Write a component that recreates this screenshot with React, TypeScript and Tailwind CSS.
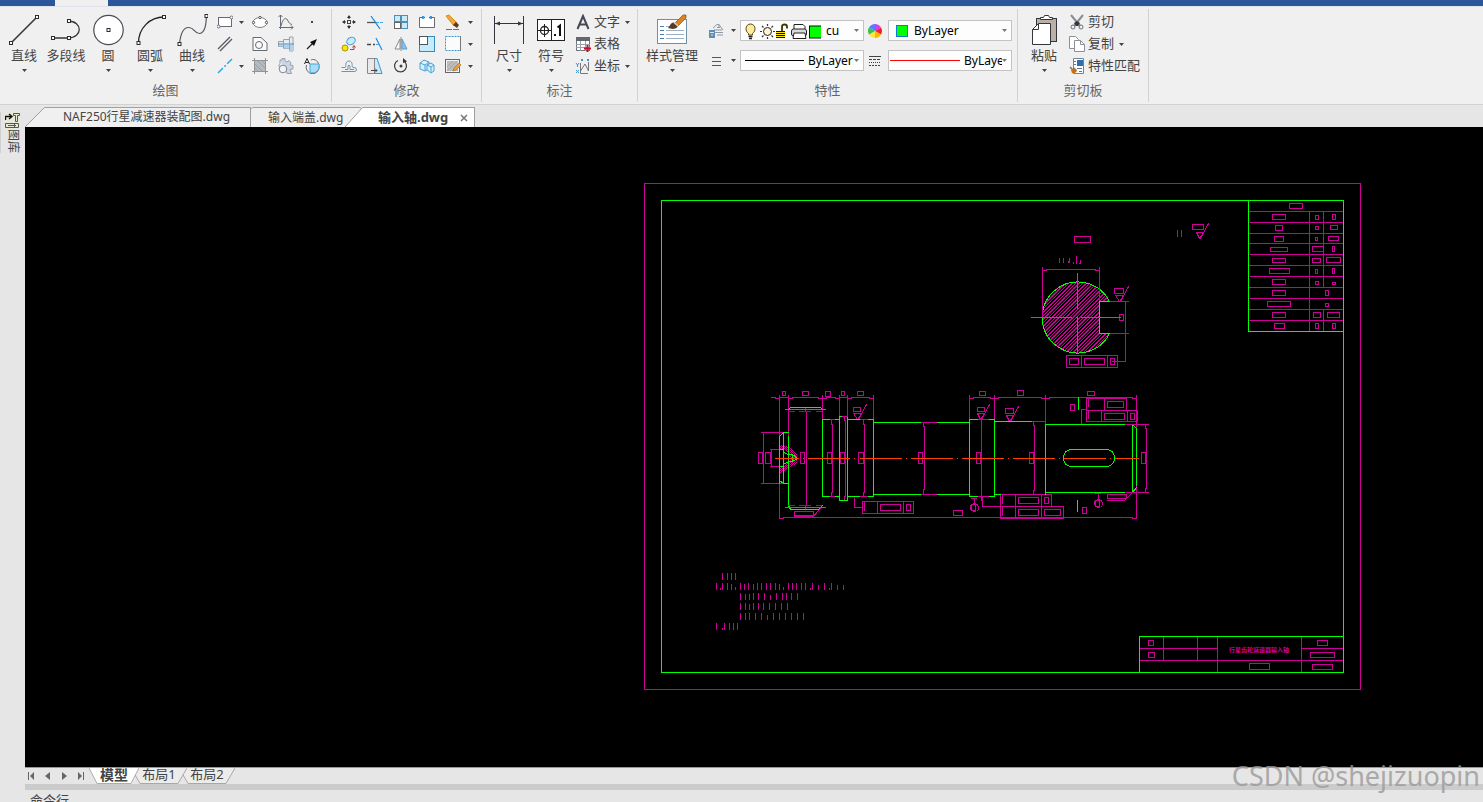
import type { ReactNode } from "react";

const MAGENTA = "#cc0099";
const GREEN = "#00ff00";
const ORANGE = "#ff3f00";
const BLUE = "#003fff";

/* ---------- small shared pieces ---------- */

function Caret({ className = "text-[#444]" }: { className?: string }) {
  return (
    <svg width="5" height="3" viewBox="0 0 5 3" className={className} aria-hidden="true">
      <path d="M0 0H5L2.5 3Z" fill="currentColor" />
    </svg>
  );
}

function Icon({ children, size = 16 }: { children: ReactNode; size?: number }) {
  const box = "0 0 " + size + " " + size;
  return (
    <svg width={size} height={size} viewBox={box} fill="none" stroke="#666b73" strokeWidth="1" className="shrink-0" aria-hidden="true">
      {children}
    </svg>
  );
}

function BigTool({ label, children, caret = true, width = "w-[42px]" }: { label: string; children: ReactNode; caret?: boolean; width?: string }) {
  return (
    <button type="button" className={"flex flex-col items-center pt-[3px] " + width}>
      <Icon size={32}>{children}</Icon>
      <span className="h-5 whitespace-nowrap text-[13px] leading-[18px]">{label}</span>
      {caret && (
        <span className="flex h-2 items-center">
          <Caret />
        </span>
      )}
    </button>
  );
}

function SmallTool({ label, children, width = "w-[26px]" }: { label: string; children: ReactNode; width?: string }) {
  return (
    <button type="button" aria-label={label} className={"flex h-[22px] items-center justify-center " + width}>
      <Icon>{children}</Icon>
    </button>
  );
}

function MoreButton({ label, width = "w-[11px]" }: { label: string; width?: string }) {
  return (
    <button type="button" aria-label={label} className={"flex h-[22px] items-center justify-center " + width}>
      <Caret />
    </button>
  );
}

function RowTool({ label, children, caret = false }: { label: string; children: ReactNode; caret?: boolean }) {
  return (
    <button type="button" className="flex h-[22px] items-center gap-[3px] text-[13px] leading-5">
      <Icon>{children}</Icon>
      <span className="whitespace-nowrap pb-[2px]">{label}</span>
      {caret && (
        <span className="ml-[2px]">
          <Caret />
        </span>
      )}
    </button>
  );
}

function Group({ label, children, className }: { label: string; children: ReactNode; className: string }) {
  return (
    <section aria-label={label} className="flex shrink-0 flex-col border-r border-[#d2d2d2] pt-[2px]">
      <div className={"flex h-[66px] items-start " + className}>{children}</div>
      <div className="mt-1 h-5 text-center text-[13px] leading-[19px] text-[#666]">{label}</div>
    </section>
  );
}

function Combo({ label, value, lead, gap = "gap-1" }: { label: string; value: string; lead: ReactNode; gap?: string }) {
  return (
    <label className="flex h-[21px] w-[124px] items-center border border-[#c3c3c3] bg-[#fdfdfd] pr-1 text-black">
      <span className={"flex min-w-0 flex-1 items-center " + gap}>
        {lead}
        <select aria-label={label} className="min-w-0 flex-1 appearance-none bg-transparent text-[12px] leading-4 outline-none">
          <option>{value}</option>
        </select>
      </span>
      <Caret className="shrink-0 text-[#777]" />
    </label>
  );
}

function Node({ x, y }: { x: number; y: number }) {
  return <rect x={x - 1.5} y={y - 1.5} width="3" height="3" fill="#fff" stroke="#2b2d33" />;
}

/* ---------- ribbon ---------- */

function DrawGroup() {
  return (
    <Group label="绘图" className="pl-[3px] pr-[6px]">
      <BigTool label="直线">
        <path d="M3 29L29 3" stroke="#33363d" strokeWidth="1.6" />
        <Node x={3} y={29} />
        <Node x={29} y={3} />
      </BigTool>
      <BigTool label="多段线" caret={false}>
        <path d="M3 24H18C33 24 33 7 18 7" stroke="#33363d" strokeWidth="1.3" />
        <Node x={3} y={24} />
        <Node x={19} y={24} />
        <Node x={19} y={7} />
      </BigTool>
      <BigTool label="圆">
        <circle cx="16.5" cy="16" r="14.7" fill="#fff" stroke="#4a4d55" strokeWidth="1.2" />
        <Node x={16.5} y={16} />
      </BigTool>
      <BigTool label="圆弧">
        <path d="M4.5 29C4.5 14 16 3 30 3" stroke="#222" strokeWidth="1.3" />
        <Node x={4.5} y={29} />
        <Node x={30} y={3} />
      </BigTool>
      <BigTool label="曲线">
        <path d="M3.500 30C4.500 20 7 13 13 13.500C19 14 18 20 24 19.500C29.500 18 30 10 30.500 2" stroke="#555860" strokeWidth="1.2" />
        <Node x={3.5} y={30} />
        <Node x={30.5} y={2} />
      </BigTool>
      <div className="ml-px grid grid-cols-[22px_11px_26px_26px_26px]">
        <SmallTool label="矩形" width="w-full">
          <rect x="1.500" y="3.500" width="13" height="9" fill="#fff" />
          <circle cx="1.500" cy="12.500" r="1.500" fill="#fff" />
          <circle cx="14.500" cy="3.500" r="1.500" fill="#fff" />
        </SmallTool>
        <MoreButton label="更多矩形" />
        <SmallTool label="椭圆">
          <ellipse cx="8" cy="8.500" rx="7" ry="5" fill="#fff" stroke="#7c8087" />
          <circle cx="1.500" cy="8.500" r="1.200" fill="#fff" stroke="#555" />
          <circle cx="14.500" cy="8.500" r="1.200" fill="#fff" stroke="#555" />
          <circle cx="8" cy="3.500" r="1.200" fill="#fff" stroke="#555" />
        </SmallTool>
        <SmallTool label="公式曲线">
          <path d="M2.500 1V15M0.500 3L2.500 1L4.500 3M1 13.500H15M13 11.500L15 13.500L13 15.500M3 12C5 4 8 3 9.500 6C11 9 12 10 14 10.500" />
        </SmallTool>
        <SmallTool label="点">
          <rect x="7" y="7" width="2" height="2" fill="#444" stroke="none" />
        </SmallTool>

        <SmallTool label="平行线" width="w-full">
          <path d="M1 13L13 1M3 15L15 3" stroke="#55585e" strokeWidth="1.300" />
        </SmallTool>
        <span />
        <SmallTool label="轮廓">
          <path d="M1 1.500H9L15 7V14.500H1Z" fill="#fafafa" />
          <circle cx="7" cy="9" r="3.500" />
        </SmallTool>
        <SmallTool label="孔轴">
          <path d="M0.500 5.500H5.500V3.500H11.500V1H15V15H11.500V12.500H5.500V10.500H0.500Z" fill="#e7edf2" stroke="#9aa1a8" />
          <path d="M1 9H15V15H11.500V12.500H5.500V10.500H1Z" fill="#b4cfe6" stroke="none" />
          <path d="M0 8H16" stroke="#3b8bcf" />
          <path d="M5.500 4V12M11.500 2V14" stroke="#9aa1a8" />
        </SmallTool>
        <SmallTool label="箭头">
          <path d="M3 13L9 7" stroke="#222" strokeWidth="1.300" />
          <path d="M13 3L6 6L10 10Z" fill="#111" stroke="none" />
        </SmallTool>

        <SmallTool label="中心线" width="w-full">
          <path d="M1 15L15 1" stroke="#2fa8df" strokeWidth="1.500" strokeDasharray="7 2 2 2" />
        </SmallTool>
        <MoreButton label="更多中心线" />
        <SmallTool label="剖面线">
          <rect x="2.500" y="2.500" width="11" height="11" fill="#b4bbbf" stroke="#777" />
          <path d="M2.500 0V16M13.500 0V16M0 2.500H16M0 13.500H16" stroke="#909599" />
          <path d="M3 6L10 13M3 10L6 13M6 3L13 10M10 3L13 6" stroke="#9ba1a5" />
        </SmallTool>
        <SmallTool label="齿轮">
          <path d="M2 2H4V0.500H7V3L9 4L11 2.500L13 5L12 7L15 7.500V11L12 11.500L13.500 15.500H9L8 13" fill="#ccd5e2" stroke="#99a2b1" />
          <path d="M2 2V6L0.500 8L3 9" stroke="#99a2b1" />
          <circle cx="5" cy="11" r="3.800" fill="#f2f2f2" stroke="#7d8694" />
        </SmallTool>
        <SmallTool label="局部放大">
          <path d="M7 2C11 0 15 4 15 8A6.500 6.500 0 1 1 2.500 7" />
          <path d="M6 6H15V9A6 6 0 0 1 6 14Z" fill="#a9dcf5" stroke="#4aa7d9" />
          <path d="M0.500 6L3 0.500L5.500 6M1.500 4.500H4.500" stroke="#222" />
        </SmallTool>
      </div>
    </Group>
  );
}

function ModifyGroup() {
  return (
    <Group label="修改" className="pl-1 pr-[7px]">
      <div className="grid grid-cols-[26px_26px_26px_26px_26px_8px]">
        <SmallTool label="平移">
          <path d="M8 2V5M8 11V14M2 8H5M11 8H14" stroke="#333" />
          <path d="M8 1L10 4H6ZM8 15L10 12H6ZM1 8L4 6V10ZM15 8L12 6V10Z" fill="#333" stroke="none" />
          <rect x="6.500" y="6.500" width="3" height="3" stroke="#444" />
        </SmallTool>
        <SmallTool label="裁剪">
          <path d="M0 8.500H9" stroke="#555" strokeWidth="1.300" />
          <path d="M9 8.500H16" stroke="#45a5e0" strokeDasharray="3 1" />
          <path d="M4 2L13 15" stroke="#1a86d8" strokeWidth="1.300" />
        </SmallTool>
        <SmallTool label="阵列">
          <rect x="1.500" y="1.500" width="6" height="6" fill="#c6ecfb" stroke="#4a90bb" />
          <rect x="8.500" y="1.500" width="6" height="6" fill="#c6ecfb" stroke="#4a90bb" />
          <rect x="8.500" y="8.500" width="6" height="6" fill="#c6ecfb" stroke="#4a90bb" />
          <rect x="1.500" y="8.500" width="6" height="6" fill="#fff" stroke="#666" />
        </SmallTool>
        <SmallTool label="打断">
          <path d="M4 3.500H0.500V13.500H15.500V3.500H12" fill="#fff" />
          <path d="M4 2V5M12 2V5M5 3.500H6M10 3.500H11" stroke="#1a86d8" strokeWidth="1.600" />
        </SmallTool>
        <SmallTool label="删除">
          <path d="M1 2L4 1L12 9L9 12Z" fill="#f3a63a" stroke="#d98b1e" />
          <path d="M8 11L11 8L14 11L12 14Z" fill="#5e3a22" stroke="none" />
          <path d="M1 15.500H15" stroke="#9c5a50" strokeDasharray="6 1" />
        </SmallTool>
        <MoreButton label="更多删除" width="w-2" />

        <SmallTool label="平移复制">
          <circle cx="4" cy="12" r="3" fill="#ffe600" stroke="#a59200" />
          <ellipse cx="10" cy="5" rx="4.500" ry="3.500" fill="#c6ecfb" stroke="#3c96cc" transform="rotate(-35 10 5)" />
          <path d="M9 13.500H13V10M11.500 11.500L13 9.500L14.500 11.500" stroke="#c8362e" />
        </SmallTool>
        <SmallTool label="延伸">
          <path d="M0 8.500H4M6 8.500H8" stroke="#444" strokeWidth="1.300" />
          <path d="M9 2L15 14" stroke="#2a8fd4" strokeWidth="1.300" />
          <path d="M9 8.500H12" stroke="#45a5e0" />
        </SmallTool>
        <SmallTool label="镜像">
          <path d="M7 3V13H2Z" fill="#fff" stroke="#888" />
          <path d="M9 3V13H14Z" fill="#8fc1e8" stroke="#5d9dcc" />
          <path d="M8 1V15" stroke="#888" />
        </SmallTool>
        <SmallTool label="缩放">
          <rect x="0.500" y="0.500" width="15" height="15" fill="#c6ecfb" stroke="#3c88ba" />
          <rect x="0.500" y="0.500" width="8" height="8" fill="#fff" stroke="#555" />
        </SmallTool>
        <SmallTool label="拉伸">
          <rect x="0.500" y="0.500" width="15" height="14" fill="#fbfbfb" stroke="#3c96cc" strokeDasharray="2 1" />
          <path d="M15.500 0V15" stroke="#777" />
        </SmallTool>
        <MoreButton label="更多拉伸" width="w-2" />

        <SmallTool label="等距线">
          <path d="M0.500 9.500H4C6 9 3 3.500 8 3C13 3.500 10 9 12 9.500H13Q15.500 9.500 15.500 12Q15.500 13.500 13 13.500H0.500" stroke="#7591a6" />
          <path d="M4 11.500H7V8Q8 6 9 8V11.500H13" stroke="#7591a6" />
        </SmallTool>
        <SmallTool label="倾斜">
          <path d="M7 0.500H10L15 15.500H7Z" fill="#c6ecfb" stroke="#3c96cc" />
          <path d="M0.500 0.500H7.500V15.500H0.500Z" fill="#e9e9e9" stroke="#888" />
          <path d="M4 12.500H10M8 10.500L10 12.500L8 14.500" stroke="#444" />
        </SmallTool>
        <SmallTool label="旋转">
          <path d="M10 2.500A6 6 0 1 1 5 2.500" stroke="#444" strokeWidth="1.300" />
          <path d="M10 0L14 3.500L10 5Z" fill="#333" stroke="none" />
          <circle cx="8" cy="8" r="1.500" fill="#444" stroke="none" />
        </SmallTool>
        <SmallTool label="三维">
          <path d="M1 5L5 2L10 4V11L6 13L1 11Z M1 5L6 7L10 4M6 7V13" fill="#d4effc" stroke="#4aa3d6" />
          <path d="M8 7L12 5L15 7V13L12 15L8 12Z M8 7L12 9V15M12 9L15 7" fill="#d4effc" stroke="#4aa3d6" />
        </SmallTool>
        <SmallTool label="填充编辑">
          <rect x="0.500" y="1.500" width="14" height="13" fill="#f2f2f2" stroke="#666" />
          <rect x="2" y="3" width="11" height="10" fill="#bdbdbd" stroke="none" />
          <path d="M2 9L8 3M2 13L12 3M7 13L13 7" stroke="#a5a5a5" />
          <path d="M8 13L9 10L14 5L16 7L11 12Z" fill="#e9a13a" stroke="#a36b1b" strokeWidth="0.600" />
        </SmallTool>
        <MoreButton label="更多填充" width="w-2" />
      </div>
    </Group>
  );
}

function AnnotateGroup() {
  return (
    <Group label="标注" className="pl-[6px] pr-[7px]">
      <BigTool label="尺寸">
        <path d="M1.500 2V30M30.500 2V30M2 9.500H30" stroke="#33363d" />
        <path d="M2 9.500L7 7.500V11.500ZM30 9.500L25 7.500V11.500Z" fill="#33363d" stroke="none" />
      </BigTool>
      <BigTool label="符号">
        <rect x="2.500" y="5.500" width="27" height="21" fill="#fff" stroke="#222" />
        <path d="M16.500 5.500V26.500M3 16.500H16M9.500 10V23" stroke="#222" />
        <circle cx="9.500" cy="16.500" r="4" stroke="#222" strokeWidth="1.300" />
        <rect x="19" y="20" width="2" height="2" fill="#111" stroke="none" />
        <path d="M22.500 13.500L25 11.500V22" stroke="#111" strokeWidth="2" />
      </BigTool>
      <div className="ml-[3px] flex flex-col items-start">
        <RowTool label="文字" caret>
          <path d="M2.500 15L8 2L13.500 15M4.500 10.500H11.500" stroke="#444851" strokeWidth="2" />
        </RowTool>
        <RowTool label="表格">
          <rect x="1.500" y="1.500" width="13" height="13" fill="#fff" stroke="#70757c" />
          <rect x="1" y="1" width="14" height="4" fill="#63686f" stroke="none" />
          <path d="M1 8.500H15M1 11.500H15M5.500 5V15M10.500 5V15" stroke="#9aa0a7" />
          <path d="M12.500 9V16M9 12.500H16" stroke="#c8102e" strokeWidth="2" />
        </RowTool>
        <RowTool label="坐标" caret>
          <path d="M5.500 5V15.500H13M5.500 13L10 6L13.500 13V4" stroke="#777" />
          <path d="M1 5L2.500 7L4 5M2.500 7V9M1 12L4 15M4 12L1 15M6 1L8 3M8 1L6 3M12 1L14 3M14 1L12 3" stroke="#3c96cc" />
        </RowTool>
      </div>
    </Group>
  );
}

function LayerIcons() {
  return (
    <svg width="80" height="18" viewBox="0 0 80 18" fill="none" stroke="#222" className="shrink-0" aria-hidden="true">
      <path d="M7.500 13V11.500C5.500 10 5 8.500 5 6.500A4.500 4.500 0 0 1 14 6.500C14 8.500 13.500 10 11.500 11.500V13Z" fill="#ffeb9c" stroke="#4f4520" />
      <path d="M7.500 14.500H11.500M8 16.500H11" stroke="#222" strokeWidth="1.400" />
      <circle cx="26.500" cy="9.500" r="4" fill="#fff3d2" stroke="#222" />
      <path d="M26.500 2V4M26.500 15V17M19 9.500H21M32 9.500H34M21 4L22.500 5.500M32 4L30.500 5.500M21 15L22.500 13.500M32 15L30.500 13.500" stroke="#333" strokeWidth="1.200" />
      <rect x="35" y="9" width="9" height="7" fill="#ffe600" stroke="none" />
      <path d="M35 9.500H44M35 11.500H44M35 13.500H44M35 15.500H44" stroke="#111" />
      <path d="M41 9V4.500Q41 2.500 43.500 2.500Q46 2.500 46 4.500V6.500" stroke="#3d3800" strokeWidth="1.800" />
      <path d="M53 7V2.500H62L64 4.500V7" fill="#fff" />
      <rect x="50.500" y="7" width="15" height="7" rx="2" fill="#d7dadd" />
      <path d="M53 11H64L65 16.500H52Z" fill="#fff" />
      <rect x="68.500" y="4" width="12" height="12" fill="#00ff00" stroke="#111" />
    </svg>
  );
}

function PropertiesGroup() {
  return (
    <Group label="特性" className="pl-1 pr-[5px]">
      <BigTool label="样式管理" width="w-[60px]">
        <rect x="1.500" y="5.500" width="29" height="24" fill="#fff" stroke="#6f8ea8" />
        <path d="M4 12.500H8M4 16.500H8M4 20.500H8M4 24.500H8" stroke="#4b78a8" />
        <path d="M10 12.500H18M10 16.500H28M10 20.500H28M10 24.500H28" stroke="#9cb0c4" />
        <path d="M12 14C14 12 15 8 18 8.500L22 12C20 16 15 15 12 14Z" fill="#5a3a22" stroke="none" />
        <path d="M19 9L27 1L30 1V4L22 12Z" fill="#d98423" stroke="#a35b14" strokeWidth="0.800" />
        <path d="M18 8.500L22 12" stroke="#d5d5d5" strokeWidth="1.500" />
      </BigTool>
      <div className="ml-[6px] flex flex-col gap-[9px] pt-[9px]">
        <div className="flex h-[21px] items-center">
          <button type="button" aria-label="图层管理" className="flex w-[18px]">
            <Icon>
              <path d="M5 5L9 1.500H11L15 7M6 7H14M7 9.500H15M9 12H15M9 4.500H12M11 1.500V4" stroke="#8b97a3" />
              <rect x="1" y="7" width="6" height="8" fill="#5f8db5" stroke="none" />
              <path d="M2 9.500H6M3 12H5" stroke="#dde8f2" />
            </Icon>
          </button>
          <MoreButton label="更多图层" width="w-[14px]" />
          <Combo label="图层" value="cu" lead={<LayerIcons />} gap="gap-[5px]" />
          <button type="button" aria-label="颜色" className="flex w-6 justify-center">
            <Icon>
              <g stroke="none">
                <path d="M7 8L7 1A7 7 0 0 1 13 4.500Z" fill="#d13cf0" />
                <path d="M7 8L13 4.500A7 7 0 0 1 13 11.500Z" fill="#f01d2b" />
                <path d="M7 8L13 11.500A7 7 0 0 1 7 15Z" fill="#ffb400" />
                <path d="M7 8V15A7 7 0 0 1 1 11.500Z" fill="#ffe43d" />
                <path d="M7 8L1 11.500A7 7 0 0 1 1 4.500Z" fill="#35c24a" />
                <path d="M7 8L1 4.500A7 7 0 0 1 7 1Z" fill="#5a7bff" />
              </g>
            </Icon>
          </button>
          <Combo
            label="颜色选择"
            value="ByLayer"
            gap="gap-[6px]"
            lead={<span className="ml-[7px] h-3 w-3 shrink-0 border border-[#1477d4] bg-[#00ff00]" />}
          />
        </div>
        <div className="flex h-[21px] items-center">
          <button type="button" aria-label="线宽设置" className="flex w-[18px]">
            <Icon>
              <path d="M4 4.500H13M4 8.500H13M4 12.500H13" stroke="#555" />
            </Icon>
          </button>
          <MoreButton label="更多线宽" width="w-[14px]" />
          <Combo label="线型选择" value="ByLayer" lead={<span className="ml-1 h-px w-[59px] shrink-0 bg-black" />} />
          <button type="button" aria-label="线型" className="flex w-6 justify-center">
            <Icon>
              <path d="M1 3.500H13" stroke="#444" />
              <path d="M1 6.500H13" stroke="#444" strokeDasharray="3 1" />
              <path d="M1 9.500H13" stroke="#444" strokeDasharray="1 1" />
              <path d="M1 12.500H13" stroke="#444" strokeDasharray="2 1" />
            </Icon>
          </button>
          <Combo label="线宽选择" value="ByLayer" lead={<span className="ml-px h-px w-[70px] shrink-0 bg-[#ff0000]" />} />
        </div>
      </div>
    </Group>
  );
}

function ClipboardGroup() {
  return (
    <Group label="剪切板" className="pl-[5px] pr-2">
      <BigTool label="粘贴">
        <rect x="8.500" y="4.500" width="20" height="23" fill="#b9b0a6" stroke="#33363d" />
        <path d="M12.500 5.500V3.500H15.500L16.500 1.500H20.500L21.500 3.500H24.500V5.500Z" fill="#fff" stroke="#33363d" />
        <path d="M10.500 9.500H22.500V30.500H4.500V15.500Z" fill="#fff" stroke="#33363d" />
        <path d="M10.500 9.500V15.500H4.500" stroke="#33363d" />
      </BigTool>
      <div className="ml-1 flex flex-col items-start">
        <RowTool label="剪切">
          <path d="M2 1L11 12M14 1L5 12" stroke="#8a8d92" strokeWidth="2" />
          <path d="M5 9L8 7L11 9L9 12H7Z" fill="#33363b" stroke="none" />
          <circle cx="4" cy="13" r="2" stroke="#6c7075" />
          <circle cx="12" cy="13" r="2" stroke="#6c7075" />
        </RowTool>
        <RowTool label="复制" caret>
          <path d="M0.500 0.500H6.500L9.500 3.500V12.500H0.500Z" fill="#fff" stroke="#8d9096" />
          <path d="M5.500 4.500H11.500L15.500 8.500V15.500H5.500Z" fill="#fff" stroke="#8d9096" />
          <path d="M11.500 4.500V8.500H15.500" stroke="#8d9096" />
        </RowTool>
        <RowTool label="特性匹配">
          <path d="M4.500 0.500H14.500V15.500H4.500Z" fill="#fff" stroke="#70859a" />
          <rect x="8" y="2" width="6" height="6" fill="#2f6fae" stroke="none" />
          <path d="M5 3.500H7M5 6.500H7M8 10.500H13M10 13.500H13" stroke="#5a7590" />
          <path d="M1 9L4 12L6 10" stroke="#98704e" strokeWidth="1.600" />
          <path d="M2 12Q6 9 8 12Q7 16 3 15Z" fill="#c0721c" stroke="none" />
        </RowTool>
      </div>
    </Group>
  );
}

/* ---------- drawing ---------- */

type Box = [number, number, number, number];

const boxPath = (boxes: Box[]) => boxes.map(([a, b, c, d]) => `M${a} ${b}H${c}V${d}H${a}Z`).join("");

const dimPath = (dims: Box[]) =>
  dims.map(([a, b, y, drop]) => `M${a} ${y + drop}H${a + 4}V${y}H${b - 4}V${y + drop}H${b}`).join("");

const tableBoxes: Box[] = [
  [1289, 203, 1302, 208],
  [1272, 214, 1285, 219], [1275, 225, 1282, 230], [1274, 236, 1283, 241], [1270, 247, 1287, 251],
  [1272, 258, 1285, 262], [1269, 268, 1289, 273], [1272, 279, 1285, 284], [1272, 290, 1285, 295],
  [1267, 301, 1290, 306], [1272, 312, 1285, 317], [1274, 323, 1284, 328],
  [1315, 215, 1318, 219], [1315, 226, 1318, 229], [1315, 237, 1317, 240], [1312, 246, 1323, 251],
  [1312, 258, 1320, 262], [1315, 269, 1317, 273], [1315, 281, 1318, 284], [1325, 290, 1328, 295],
  [1325, 303, 1328, 306], [1313, 312, 1320, 317], [1315, 323, 1318, 328],
  [1332, 214, 1335, 219], [1330, 225, 1337, 229], [1328, 236, 1338, 240], [1332, 246, 1334, 251],
  [1326, 257, 1340, 262], [1332, 268, 1334, 273], [1332, 282, 1335, 284], [1327, 312, 1339, 317],
  [1332, 323, 1335, 328],
];

const titleBoxes: Box[] = [
  [1148, 640, 1153, 645], [1148, 652, 1154, 657], [1317, 640, 1327, 645],
  [1310, 652, 1334, 657], [1312, 664, 1332, 669], [1249, 663, 1269, 669],
];

const shaftBoxes: Box[] = [
  [782, 391, 785, 395], [802, 391, 808, 395], [825, 391, 830, 396], [841, 391, 844, 395],
  [857, 391, 863, 395], [979, 391, 985, 395], [1017, 390, 1023, 395], [1087, 391, 1094, 395],
  [758, 452, 762, 463], [765, 452, 770, 463], [800, 452, 804, 463], [827, 452, 831, 463],
  [840, 452, 844, 463], [858, 452, 863, 463], [918, 452, 922, 463], [976, 452, 980, 463],
  [1029, 452, 1033, 463], [1141, 452, 1145, 463],
  [853, 407, 860, 411], [977, 407, 984, 411], [1005, 408, 1013, 413],
  [794, 511, 813, 515], [862, 501, 913, 513], [880, 504, 900, 510], [906, 504, 910, 510],
  [953, 510, 962, 515], [971, 504, 975, 510], [1070, 404, 1074, 410],
  [1086, 398, 1126, 410], [1107, 401, 1123, 407], [1086, 410, 1137, 421], [1104, 413, 1124, 419],
  [1130, 413, 1134, 419], [1000, 494, 1051, 506], [1018, 497, 1038, 503], [1044, 497, 1048, 503],
  [1000, 506, 1063, 518], [1018, 509, 1038, 515], [1044, 509, 1060, 515],
  [1082, 507, 1086, 513], [1095, 500, 1099, 506], [1107, 494, 1126, 498],
];

const sectionBoxes: Box[] = [
  [1074, 236, 1090, 242], [1114, 288, 1123, 293], [1119, 314, 1123, 320], [1066, 355, 1117, 367],
  [1069, 358, 1078, 364], [1084, 358, 1104, 364], [1110, 358, 1114, 364], [1192, 224, 1203, 229],
];

/* Each note line: bottom row followed by [x, stroke length] pairs. */
const notes: { base: number; strokes: [number, number][] }[] = [
  { base: 579, strokes: [[722, 6], [727, 6], [731, 6], [735, 6]] },
  {
    base: 589,
    strokes: [
      [716, 6], [720, 1], [722, 6], [727, 6], [731, 5], [735, 2], [740, 6], [744, 5], [748, 6], [753, 5],
      [757, 6], [761, 6], [766, 6], [770, 6], [775, 6], [779, 5], [783, 2], [788, 6], [792, 6], [796, 6],
      [801, 6], [805, 6], [810, 1], [812, 6], [818, 4], [824, 6], [829, 1], [831, 6], [837, 4], [843, 4],
    ],
  },
  {
    base: 599,
    strokes: [[740, 6], [745, 5], [749, 5], [753, 6], [758, 6], [764, 6], [770, 4], [776, 6], [782, 6], [786, 6], [791, 6], [797, 6]],
  },
  { base: 609, strokes: [[740, 6], [745, 6], [749, 5], [753, 6], [758, 6], [763, 6], [769, 6], [775, 6], [781, 6], [787, 6]] },
  {
    base: 619,
    strokes: [[740, 6], [745, 6], [749, 6], [755, 6], [761, 6], [767, 4], [773, 6], [779, 6], [785, 6], [791, 6], [797, 6], [803, 6]],
  },
  { base: 629, strokes: [[716, 6], [722, 1], [724, 6], [729, 6], [733, 6], [737, 6]] },
];

const notePath = notes.flatMap((n) => n.strokes.map(([x, h]) => `M${x} ${n.base}v${-h}`)).join("");

const rowLines = [211, 222, 233, 243, 254, 265, 276, 287, 298, 309, 320].map((y) => `M1249 ${y}H1342`).join("");

const hatchPath = Array.from({ length: 42 }, (_, i) => `M${970 + i * 3.5} 354l74 -74`).join("");

function Drawing() {
  return (
    <svg viewBox="25 127 1458 640" className="block h-full w-full" fill="none" strokeWidth="1" shapeRendering="crispEdges" role="img" aria-label="输入轴">
      <defs>
        <clipPath id="section">
          <path d="M1110 301.500H1099V333.500H1110A36 36 0 1 1 1110 301.500Z" />
        </clipPath>
        <pattern id="mesh" width="2" height="2" patternUnits="userSpaceOnUse">
          <path d="M0 0h1v1h-1zM1 1h1v1h-1z" fill={MAGENTA} />
        </pattern>
      </defs>
      <path d={hatchPath} clipPath="url(#section)" stroke={MAGENTA} />
      <path d="M779 445L790 447L797 453V463L779 474V466H783L790 461V455L783 449H779Z" fill="url(#mesh)" />
      <g transform="translate(0.5 0.5)" strokeLinecap="square">
        {/* sheet frames */}
        <path d="M644 183H1360V689H644Z" stroke={MAGENTA} />
        <path d="M661 200H1343V672H661Z" stroke={GREEN} />

        {/* parameter table */}
        <g stroke={MAGENTA}>
          <path d={rowLines + boxPath(tableBoxes) + "M1309 211V330M1323 211V287M1323 309V330"} />
          <path d={boxPath(titleBoxes) + "M1140 648H1217M1301 648H1342M1140 660H1342M1163 637V660M1197 637V660M1217 637V671M1301 637V671"} />
        </g>
        <path d="M1248 200V331H1343M1139 672V636H1343" stroke={GREEN} />
        <path d={notePath} stroke={MAGENTA} />

        {/* shaft: dimensions and annotations */}
        <g stroke={MAGENTA}>
          <path d={boxPath(shaftBoxes)} />
          <path d={dimPath([[788, 822, 397, 1], [822, 839, 397, 1], [847, 873, 397, 1], [969, 994, 397, 1], [994, 1045, 397, 1], [1045, 1136, 397, 1], [779, 1136, 517, 1]])} />
          <path d="M771 397H775V398H779M779 397H788M839 397H847" />
          <path d="M779 395V518M788 395V435M822 395V419M839 395V416M847 395V419M873 395V419M969 395V419M994 395V419M1045 395V424M1136 395V427M1136 486V518" />
          <path d="M761 432H783M761 483H783M763 432V483M770 449H779M770 466H779M771 449V466" />
          <path d="M805 407V411H806V505H805V509M831 419V424H832V492H831V496M844 416V420H845V496H844V500M863 419V424H864V492H863V496M923 422V426H924V489H923V494M981 419V500M1033 421V425H1034V490H1033V494M1145 424V428H1146V488H1145V492" />
          <path d="M853 413H861L857 419L853 413M858 419L866 404M977 413H984L980 419L977 413M981 419L989 404M1006 415H1013L1009 421L1006 415M1010 421L1018 406" />
          <path d="M854 496V507H862M864 501V510M877 501V513M903 501V513M794 516H813L822 505M971 498H976M974 498V503M1095 493H1100M1098 494V498" />
          <path d="M982 496V506H1000M1002 494V503M1015 494V518M1041 494V518M1002 506V515M1081 424V409H1086M1088 398V406M1104 398V410M1088 410V418M1101 410V421M1127 410V421M1107 500H1124L1136 488" />
          <circle cx="974" cy="507" r="4" />
          <circle cx="1098" cy="503" r="4" />
        </g>

        {/* shaft: outline */}
        <g stroke={GREEN}>
          <path d="M790 407H820L822 409M790 407L788 409M788 436V505L790 509H818L822 505M779 436V483M783 432V483M779 436L783 432H788M779 480L783 483H788M779 449H783M779 466H783" />
          <path d="M788 454H792V461H788ZM783 452L788 454M783 464L788 461M792 454L797 458L792 461" />
          <path d="M839 419H822V496H839M839 416H847V500H839ZM847 419H873V496H847M873 422H969M873 494H969M969 419H994V496H969ZM994 421H1032M994 494H1000" />
          <path d="M1045 424V494M1045 424H1132V492H1045M1132 424L1136 428V485M1132 492L1136 487M1078 397V409M1077 500V511" />
          <rect x="1063" y="449" width="51" height="17" rx="8" />
        </g>
        <path d="M830 419H834M842 416H847M860 419H867M921 422H936M921 494H936M830 496H834M860 496H867M978 419H988M978 496H988M1032 421H1045M1125 424H1148M1125 492H1148" stroke={MAGENTA} />
        <path d="M788 411H794M799 411H810M816 411H821M788 505H794M799 505H810M816 505H821" stroke={BLUE} />
        <path d="M785 409H825M785 507H825M775 458H798M803 458h0M808 458H849M854 458h0M860 458H901M906 458h0M911 458H952M957 458h0M962 458H1003M1008 458h0M1013 458H1054M1059 458h0M1064 458H1105M1110 458h0M1115 458H1138" stroke={ORANGE} />

        {/* keyway section */}
        <path d="M1109 301A35.500 35.500 0 1 0 1109 333" stroke={GREEN} />
        <g stroke={MAGENTA}>
          <path d={boxPath(sectionBoxes) + dimPath([[1042, 1099, 269, 1]])} />
          <path d="M1042 267V317M1099 267V301M1109 301H1128M1109 333H1128M1125 301V361H1112M1081 355V367M1107 355V367" />
          <path d="M1115 295H1123L1119 301L1115 295M1120 301L1128 286M1196 232H1203L1199 238L1196 232M1200 238L1208 223M1177 230V236M1181 230V236" />
          <path d="M1059 258V262M1063 258V262M1069 258V262M1068 261V262M1073 262V263M1076 256V263M1080 260V263M1079 263H1080" />
        </g>
        <path d="M1099 301V333M1099 301H1109M1099 333H1109" stroke={GREEN} />
        <path d="M1077 273V308M1077 317V353M1031 317H1071M1076 317H1077M1081 317H1120" stroke={ORANGE} />
      </g>
      <text x="1259" y="652" textAnchor="middle" fill={MAGENTA} stroke="none" className="text-[6px] font-bold">
        行星齿轮减速器输入轴
      </text>
    </svg>
  );
}

/* ---------- tabs ---------- */

function DocumentTabs() {
  return (
    <nav aria-label="文档" className="flex h-[22px] items-end bg-[#e6e6e6] text-[12px] text-[#444]">
      <button type="button" className="flex h-5">
        <svg width="20" height="20" viewBox="0 0 20 20" aria-hidden="true">
          <path d="M0 20L19.500 0.500H20V20Z" fill="#f0f0f0" />
          <path d="M0 20L19.500 0.500H20" fill="none" stroke="#a0a0a0" />
        </svg>
        <span className="h-5 min-w-[206px] whitespace-nowrap border-r border-t border-[#a0a0a0] bg-[#f0f0f0] px-[18px] text-left leading-[17px]">
          NAF250行星减速器装配图.dwg
        </span>
      </button>
      <button type="button" className="h-5 min-w-[111px] whitespace-nowrap rounded-t-[3px] border-t border-[#a0a0a0] bg-[#f0f0f0] pl-[17px] text-left leading-[17px]">
        输入端盖.dwg
      </button>
      <div className="-ml-[17px] flex h-5">
        <svg width="18" height="20" viewBox="0 0 18 20" aria-hidden="true">
          <path d="M0 20L17.500 0.500H18V20Z" fill="#fff" />
          <path d="M0 20L17.500 0.500H18" fill="none" stroke="#a0a0a0" />
        </svg>
        <div className="flex h-5 items-center gap-3 border-r border-t border-[#a0a0a0] bg-white pl-[15px] pr-[6px]">
          <button type="button" className="whitespace-nowrap pb-[2px] text-[13px] font-bold leading-4">输入轴.dwg</button>
          <button type="button" aria-label="关闭">
            <svg width="8" height="8" viewBox="0 0 8 8" aria-hidden="true">
              <path d="M1 1L7 7M7 1L1 7" stroke="#777" strokeWidth="1.500" />
            </svg>
          </button>
        </div>
      </div>
    </nav>
  );
}

function LayoutTab({ label, active = false, className }: { label: string; active?: boolean; className: string }) {
  return (
    <button type="button" className={"relative h-[17px] leading-[13px] " + className}>
      <svg viewBox="0 0 56 17" preserveAspectRatio="none" className="absolute inset-0 h-full w-full" aria-hidden="true">
        <path d="M0 0L9 15.500H47L56 0" fill={active ? "#fff" : "#ececec"} stroke="#a8a8a8" />
      </svg>
      <span className="relative block whitespace-nowrap pb-1">{label}</span>
    </button>
  );
}

function NavButton({ label, d }: { label: string; d: string }) {
  return (
    <button type="button" aria-label={label} className="flex h-4 w-4 items-center justify-center">
      <svg width="10" height="8" viewBox="0 0 10 8" fill="#666" aria-hidden="true">
        <path d={d} />
      </svg>
    </button>
  );
}

export default function App() {
  return (
    <div className="relative flex h-screen flex-col overflow-hidden bg-[#e6e6e6] font-['Noto_Sans','Noto_Sans_CJK_SC',sans-serif] text-[#444]">
      <div className="flex h-[6px] shrink-0 bg-[#2b579a]">
        <div className="ml-[55px] w-[53px] bg-[#f0f0f0]" />
      </div>
      <header className="flex h-[99px] shrink-0 border-b border-t border-b-[#d2d2d2] border-t-[#dfe3ea] bg-[#f0f0f0] py-[2px]">
        <DrawGroup />
        <ModifyGroup />
        <AnnotateGroup />
        <PropertiesGroup />
        <ClipboardGroup />
      </header>
      <div className="flex min-h-0 flex-1">
        <aside className="w-[25px] shrink-0 pt-[7px]">
          <button type="button" className="flex w-6 flex-col items-center border-l border-[#cfcfcf]">
            <svg width="16" height="17" viewBox="0 0 16 17" fill="none" stroke="#555" aria-hidden="true">
              <rect x="0" y="0" width="15" height="17" fill="#e9e9d8" stroke="none" />
              <path d="M0.500 8V4.500H6M4 2L7 4.500L4 7" stroke="#111" strokeWidth="1.400" />
              <path d="M8.500 1.500H14.500V3.500H12.500V9.500H10.500V3.500H8.500ZM0.500 11.500H13.500V15.500H0.500ZM3 13.500H11M9.500 12V15" />
            </svg>
            <span className="text-[12px] leading-[14px] [text-orientation:sideways] [writing-mode:vertical-rl]">图库</span>
          </button>
        </aside>
        <div className="flex min-w-0 flex-1 flex-col">
          <DocumentTabs />
          <main className="min-h-0 flex-1 bg-black">
            <Drawing />
          </main>
          <footer className="flex h-[17px] shrink-0 border-t border-[#999]">
            <div className="flex">
              <NavButton label="第一页" d="M0 0H1V8H0ZM6 0V8L2 4Z" />
              <NavButton label="上一页" d="M6 0V8L1 4Z" />
              <NavButton label="下一页" d="M2 0V8L7 4Z" />
              <NavButton label="最后一页" d="M2 0V8L6 4ZM7 0H8V8H7Z" />
            </div>
            <LayoutTab label="模型" active className="z-20 w-[50px] text-[14px] font-bold" />
            <LayoutTab label="布局1" className="z-10 -ml-[8px] w-[56px] text-[13px]" />
            <LayoutTab label="布局2" className="-ml-[8px] w-[56px] text-[13px]" />
          </footer>
          <div className="h-[6px] shrink-0 bg-[#cbcbcb]" />
          <div className="h-3 shrink-0 overflow-hidden pl-[5px] pt-[2px] text-[13px] leading-4">命令行</div>
        </div>
      </div>
      <div className="pointer-events-none absolute bottom-[6px] right-[3px] text-[27px] leading-10 text-[#9a9a9a] opacity-80">CSDN @shejizuopin</div>
    </div>
  );
}
